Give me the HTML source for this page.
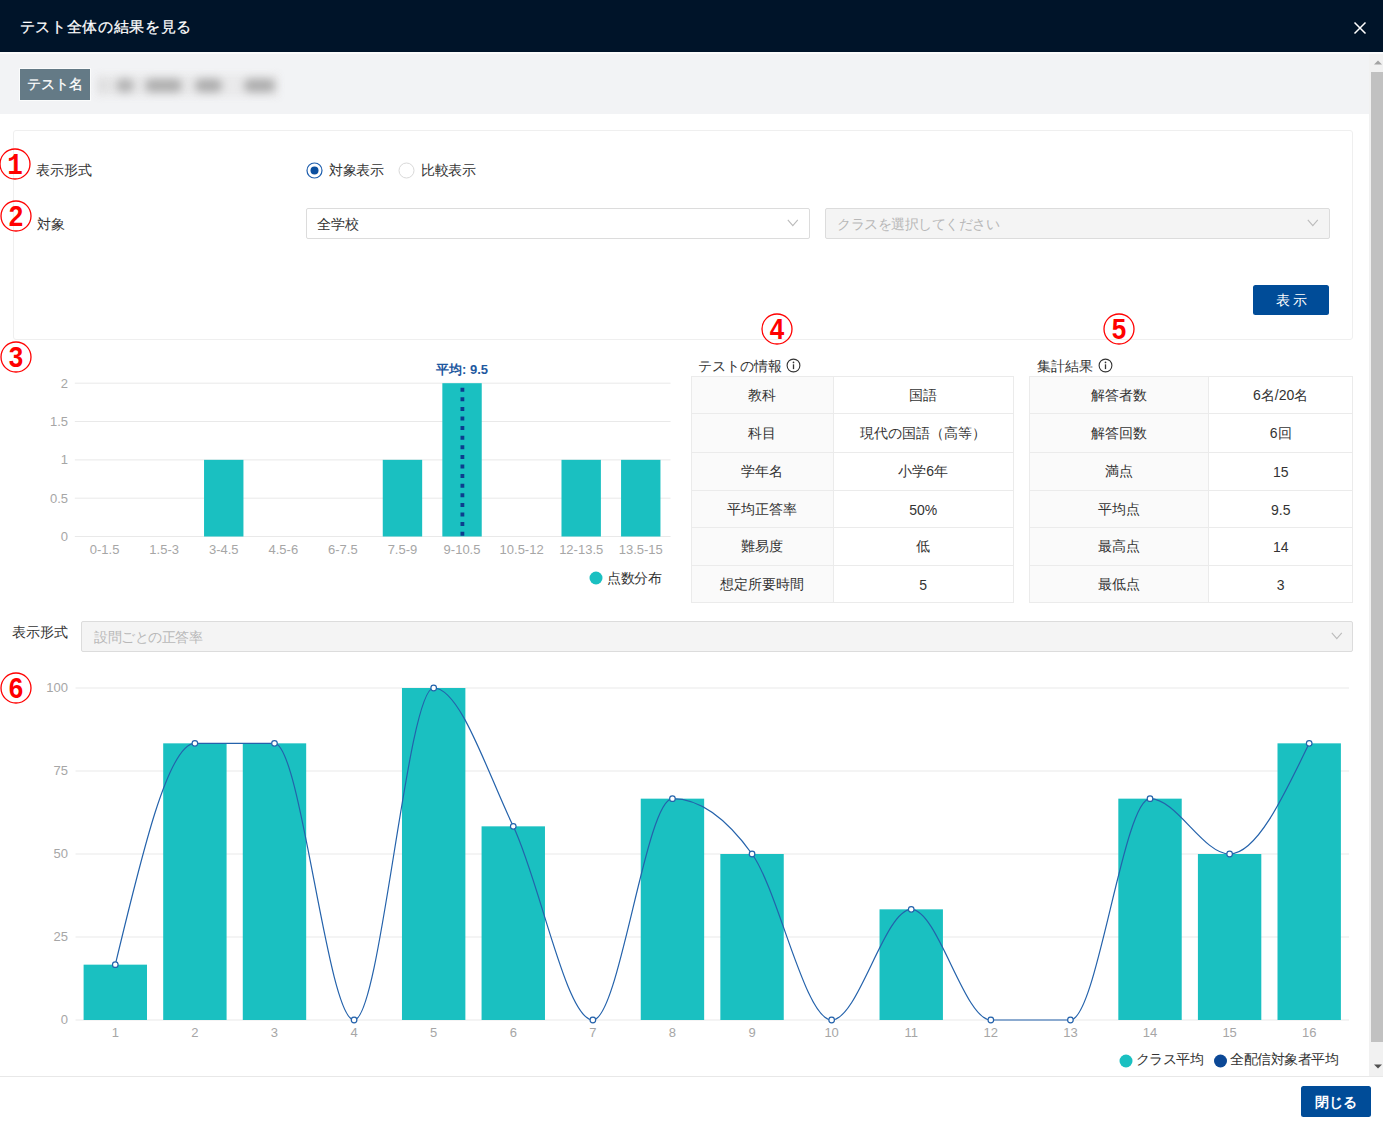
<!DOCTYPE html>
<html lang="ja"><head><meta charset="utf-8"><title>テスト全体の結果を見る</title>
<style>
*{box-sizing:border-box;margin:0;padding:0}
html,body{width:1383px;height:1121px;overflow:hidden;background:#fff}
body{position:relative;font-family:"Liberation Sans",sans-serif;color:#333;font-size:13px}
.abs{position:absolute;white-space:nowrap}
.hdr{left:0;top:0;width:1383px;height:52px;background:#001429}
.hdr-line{left:0;top:52px;width:1383px;height:2px;background:#fbfbfb}
.title{left:19.5px;top:17px;font-size:15px;line-height:20px;color:#fff;letter-spacing:0.7px;-webkit-text-stroke:0.25px #fff}
.band{left:0;top:54px;width:1369px;height:60px;background:#f2f3f5}
.lbl{left:20px;top:68.5px;width:70px;height:31px;background:#647a86;color:#fff;font-size:14px;line-height:31px;text-align:center;-webkit-text-stroke:0.25px #fff;outline:1px solid rgba(255,255,255,0.7)}
.card{left:13px;top:130px;width:1340px;height:210px;border:1px solid #efefef;border-radius:3px;background:#fff}
.txt{font-size:14px;line-height:16px;color:#333}
.sel{height:31px;border:1px solid #dcdcdc;border-radius:2px;background:#fff}
.sel.dis{background:#f4f4f4}
.btn{background:#004c98;color:#fff;border-radius:2.5px;text-align:center}
.tbl{border-collapse:collapse;position:absolute}
.tbl td{border:1px solid #ebebeb;text-align:center;font-size:14px;color:#333;padding:2px 0 0 0}
.tbl td.h{background:#fafafa}
.sb{left:1369px;top:54px;width:14px;height:1022px;background:#f1f1f1}
.thumb{left:1371px;top:72px;width:12px;height:970px;background:#c1c1c1}
</style></head><body>

<div class="abs hdr"></div><div class="abs hdr-line"></div>
<div class="abs title">テスト全体の結果を見る</div>
<svg class="abs" style="left:1353px;top:21px" width="14" height="14" viewBox="0 0 14 14"><path d="M1.5,1.5 L12.5,12.5 M12.5,1.5 L1.5,12.5" stroke="#fff" stroke-width="1.5"/></svg>
<div class="abs band"></div>
<div class="abs lbl">テスト名</div>
<div class="abs" style="left:97px;top:74px;width:182px;height:23px;background:#eaeaeb;filter:blur(3px)"></div>
<div class="abs" style="left:97px;top:79px;width:12px;height:13px;background:rgba(135,135,135,0.12);filter:blur(4px);border-radius:6px"></div>
<div class="abs" style="left:116px;top:79px;width:18px;height:13px;background:rgba(135,135,135,0.55);filter:blur(4px);border-radius:6px"></div>
<div class="abs" style="left:145px;top:79px;width:37px;height:13px;background:rgba(135,135,135,0.6);filter:blur(4px);border-radius:6px"></div>
<div class="abs" style="left:195px;top:79px;width:27px;height:13px;background:rgba(135,135,135,0.62);filter:blur(4px);border-radius:6px"></div>
<div class="abs" style="left:244px;top:79px;width:31px;height:13px;background:rgba(135,135,135,0.62);filter:blur(4px);border-radius:6px"></div>
<div class="abs card"></div>
<div class="abs txt" style="left:36px;top:162px">表示形式</div>
<div class="abs txt" style="left:36.5px;top:216px">対象</div>
<svg class="abs" style="left:305.5px;top:161.5px" width="17" height="17"><circle cx="8.5" cy="8.5" r="7.5" fill="#fff" stroke="#1f5fae" stroke-width="1.2"/><circle cx="8.5" cy="8.5" r="4" fill="#0b4f9f"/></svg>
<div class="abs txt" style="left:329px;top:162px;letter-spacing:-0.3px">対象表示</div>
<svg class="abs" style="left:398px;top:162px" width="17" height="17"><circle cx="8.5" cy="8.5" r="7.5" fill="#fff" stroke="#d9d9d9" stroke-width="1"/></svg>
<div class="abs txt" style="left:421px;top:162px;letter-spacing:-0.3px">比較表示</div>
<div class="abs sel" style="left:306px;top:208px;width:504px"></div>
<div class="abs txt" style="left:317px;top:216px">全学校</div>
<svg class="abs" style="left:787px;top:219px" width="12" height="8"><path d="M0.8,0.8 L5.8,6.6 L10.8,0.8" fill="none" stroke="#bbb" stroke-width="1.1"/></svg>
<div class="abs sel dis" style="left:825px;top:208px;width:505px"></div>
<div class="abs txt" style="left:837px;top:216px;color:#b8b8b8;letter-spacing:-0.5px">クラスを選択してください</div>
<svg class="abs" style="left:1307px;top:219px" width="12" height="8"><path d="M0.8,0.8 L5.8,6.6 L10.8,0.8" fill="none" stroke="#bbb" stroke-width="1.1"/></svg>
<div class="abs btn" style="left:1253px;top:285px;width:76px;height:30px;line-height:30px;font-size:14px;letter-spacing:3px;text-indent:3px">表示</div>
<svg class="abs" style="left:0;top:0" width="1383" height="1121" font-family="Liberation Sans"><line x1="74.8" y1="383.2" x2="670.55" y2="383.2" stroke="#e9e9e9" stroke-width="1"/><line x1="74.8" y1="421.5" x2="670.55" y2="421.5" stroke="#e9e9e9" stroke-width="1"/><line x1="74.8" y1="459.9" x2="670.55" y2="459.9" stroke="#e9e9e9" stroke-width="1"/><line x1="74.8" y1="498.2" x2="670.55" y2="498.2" stroke="#e9e9e9" stroke-width="1"/><line x1="74.8" y1="536.5" x2="670.55" y2="536.5" stroke="#e9e9e9" stroke-width="1"/><text x="68" y="387.5" text-anchor="end" font-size="13" fill="#a6a6a6">2</text><text x="68" y="425.8" text-anchor="end" font-size="13" fill="#a6a6a6">1.5</text><text x="68" y="464.2" text-anchor="end" font-size="13" fill="#a6a6a6">1</text><text x="68" y="502.5" text-anchor="end" font-size="13" fill="#a6a6a6">0.5</text><text x="68" y="540.8" text-anchor="end" font-size="13" fill="#a6a6a6">0</text><text x="104.59" y="553.5" text-anchor="middle" font-size="13" fill="#a6a6a6">0-1.5</text><text x="164.16" y="553.5" text-anchor="middle" font-size="13" fill="#a6a6a6">1.5-3</text><rect x="204.04" y="459.85" width="39.4" height="76.65" fill="#1ac0c1"/><text x="223.74" y="553.5" text-anchor="middle" font-size="13" fill="#a6a6a6">3-4.5</text><text x="283.31" y="553.5" text-anchor="middle" font-size="13" fill="#a6a6a6">4.5-6</text><text x="342.89" y="553.5" text-anchor="middle" font-size="13" fill="#a6a6a6">6-7.5</text><rect x="382.76" y="459.85" width="39.4" height="76.65" fill="#1ac0c1"/><text x="402.46" y="553.5" text-anchor="middle" font-size="13" fill="#a6a6a6">7.5-9</text><rect x="442.34" y="383.20" width="39.4" height="153.30" fill="#1ac0c1"/><text x="462.04" y="553.5" text-anchor="middle" font-size="13" fill="#a6a6a6">9-10.5</text><text x="521.61" y="553.5" text-anchor="middle" font-size="13" fill="#a6a6a6">10.5-12</text><rect x="561.49" y="459.85" width="39.4" height="76.65" fill="#1ac0c1"/><text x="581.19" y="553.5" text-anchor="middle" font-size="13" fill="#a6a6a6">12-13.5</text><rect x="621.06" y="459.85" width="39.4" height="76.65" fill="#1ac0c1"/><text x="640.76" y="553.5" text-anchor="middle" font-size="13" fill="#a6a6a6">13.5-15</text><line x1="462.4" y1="387.7" x2="462.4" y2="536.5" stroke="#0d3d8e" stroke-width="3.8" stroke-dasharray="4,5.6"/><text x="462" y="373.5" text-anchor="middle" font-size="13" font-weight="bold" fill="#1e58a0">平均: 9.5</text><circle cx="596" cy="578" r="6.5" fill="#1ac0c1"/><text x="607" y="582.5" font-size="14" letter-spacing="-0.4" fill="#333">点数分布</text><line x1="75.5" y1="688.0" x2="1349" y2="688.0" stroke="#e9e9e9" stroke-width="1"/><text x="68" y="692.3" text-anchor="end" font-size="13" fill="#a6a6a6">100</text><line x1="75.5" y1="771.0" x2="1349" y2="771.0" stroke="#e9e9e9" stroke-width="1"/><text x="68" y="775.3" text-anchor="end" font-size="13" fill="#a6a6a6">75</text><line x1="75.5" y1="854.0" x2="1349" y2="854.0" stroke="#e9e9e9" stroke-width="1"/><text x="68" y="858.3" text-anchor="end" font-size="13" fill="#a6a6a6">50</text><line x1="75.5" y1="937.0" x2="1349" y2="937.0" stroke="#e9e9e9" stroke-width="1"/><text x="68" y="941.3" text-anchor="end" font-size="13" fill="#a6a6a6">25</text><line x1="75.5" y1="1020.0" x2="1349" y2="1020.0" stroke="#e9e9e9" stroke-width="1"/><text x="68" y="1024.3" text-anchor="end" font-size="13" fill="#a6a6a6">0</text><rect x="83.60" y="964.66" width="63.4" height="55.34" fill="#1ac0c1"/><text x="115.30" y="1036.5" text-anchor="middle" font-size="13" fill="#a6a6a6">1</text><rect x="163.19" y="743.34" width="63.4" height="276.66" fill="#1ac0c1"/><text x="194.89" y="1036.5" text-anchor="middle" font-size="13" fill="#a6a6a6">2</text><rect x="242.78" y="743.34" width="63.4" height="276.66" fill="#1ac0c1"/><text x="274.48" y="1036.5" text-anchor="middle" font-size="13" fill="#a6a6a6">3</text><text x="354.08" y="1036.5" text-anchor="middle" font-size="13" fill="#a6a6a6">4</text><rect x="401.97" y="688.00" width="63.4" height="332.00" fill="#1ac0c1"/><text x="433.67" y="1036.5" text-anchor="middle" font-size="13" fill="#a6a6a6">5</text><rect x="481.57" y="826.34" width="63.4" height="193.66" fill="#1ac0c1"/><text x="513.27" y="1036.5" text-anchor="middle" font-size="13" fill="#a6a6a6">6</text><text x="592.86" y="1036.5" text-anchor="middle" font-size="13" fill="#a6a6a6">7</text><rect x="640.75" y="798.66" width="63.4" height="221.34" fill="#1ac0c1"/><text x="672.45" y="1036.5" text-anchor="middle" font-size="13" fill="#a6a6a6">8</text><rect x="720.35" y="854.00" width="63.4" height="166.00" fill="#1ac0c1"/><text x="752.05" y="1036.5" text-anchor="middle" font-size="13" fill="#a6a6a6">9</text><text x="831.64" y="1036.5" text-anchor="middle" font-size="13" fill="#a6a6a6">10</text><rect x="879.53" y="909.34" width="63.4" height="110.66" fill="#1ac0c1"/><text x="911.23" y="1036.5" text-anchor="middle" font-size="13" fill="#a6a6a6">11</text><text x="990.83" y="1036.5" text-anchor="middle" font-size="13" fill="#a6a6a6">12</text><text x="1070.42" y="1036.5" text-anchor="middle" font-size="13" fill="#a6a6a6">13</text><rect x="1118.32" y="798.66" width="63.4" height="221.34" fill="#1ac0c1"/><text x="1150.02" y="1036.5" text-anchor="middle" font-size="13" fill="#a6a6a6">14</text><rect x="1197.91" y="854.00" width="63.4" height="166.00" fill="#1ac0c1"/><text x="1229.61" y="1036.5" text-anchor="middle" font-size="13" fill="#a6a6a6">15</text><rect x="1277.50" y="743.34" width="63.4" height="276.66" fill="#1ac0c1"/><text x="1309.20" y="1036.5" text-anchor="middle" font-size="13" fill="#a6a6a6">16</text><path d="M115.30,964.66 C141.83,854.00 168.36,743.34 194.89,743.34 C221.42,743.34 247.95,743.34 274.48,743.34 C301.02,743.34 327.55,1020.00 354.08,1020.00 C380.61,1020.00 407.14,688.00 433.67,688.00 C460.20,688.00 486.73,771.01 513.27,826.34 C539.80,881.68 566.33,1020.00 592.86,1020.00 C619.39,1020.00 645.92,798.66 672.45,798.66 C698.98,798.66 725.52,817.11 752.05,854.00 C778.58,890.89 805.11,1020.00 831.64,1020.00 C858.17,1020.00 884.70,909.34 911.23,909.34 C937.77,909.34 964.30,1020.00 990.83,1020.00 C1017.36,1020.00 1043.89,1020.00 1070.42,1020.00 C1096.95,1020.00 1123.48,798.66 1150.02,798.66 C1176.55,798.66 1203.08,854.00 1229.61,854.00 C1256.14,854.00 1282.67,798.67 1309.20,743.34" fill="none" stroke="#2462ab" stroke-width="1.2"/><circle cx="115.30" cy="964.66" r="2.8" fill="#fff" stroke="#2462ab" stroke-width="1.2"/><circle cx="194.89" cy="743.34" r="2.8" fill="#fff" stroke="#2462ab" stroke-width="1.2"/><circle cx="274.48" cy="743.34" r="2.8" fill="#fff" stroke="#2462ab" stroke-width="1.2"/><circle cx="354.08" cy="1020.00" r="2.8" fill="#fff" stroke="#2462ab" stroke-width="1.2"/><circle cx="433.67" cy="688.00" r="2.8" fill="#fff" stroke="#2462ab" stroke-width="1.2"/><circle cx="513.27" cy="826.34" r="2.8" fill="#fff" stroke="#2462ab" stroke-width="1.2"/><circle cx="592.86" cy="1020.00" r="2.8" fill="#fff" stroke="#2462ab" stroke-width="1.2"/><circle cx="672.45" cy="798.66" r="2.8" fill="#fff" stroke="#2462ab" stroke-width="1.2"/><circle cx="752.05" cy="854.00" r="2.8" fill="#fff" stroke="#2462ab" stroke-width="1.2"/><circle cx="831.64" cy="1020.00" r="2.8" fill="#fff" stroke="#2462ab" stroke-width="1.2"/><circle cx="911.23" cy="909.34" r="2.8" fill="#fff" stroke="#2462ab" stroke-width="1.2"/><circle cx="990.83" cy="1020.00" r="2.8" fill="#fff" stroke="#2462ab" stroke-width="1.2"/><circle cx="1070.42" cy="1020.00" r="2.8" fill="#fff" stroke="#2462ab" stroke-width="1.2"/><circle cx="1150.02" cy="798.66" r="2.8" fill="#fff" stroke="#2462ab" stroke-width="1.2"/><circle cx="1229.61" cy="854.00" r="2.8" fill="#fff" stroke="#2462ab" stroke-width="1.2"/><circle cx="1309.20" cy="743.34" r="2.8" fill="#fff" stroke="#2462ab" stroke-width="1.2"/><circle cx="1126" cy="1061" r="6.5" fill="#1ac0c1"/><text x="1135.5" y="1064" font-size="14" letter-spacing="-0.4" fill="#333">クラス平均</text><circle cx="1220.5" cy="1061" r="6.5" fill="#0c4896"/><text x="1230" y="1064" font-size="14" letter-spacing="-0.5" fill="#333">全配信対象者平均</text></svg>
<div class="abs txt" style="left:698px;top:358px">テストの情報</div>
<div class="abs txt" style="left:1037px;top:358px">集計結果</div>
<svg class="abs" style="left:785.6px;top:358.1px" width="15" height="15"><circle cx="7.5" cy="7.5" r="6.4" fill="none" stroke="#333" stroke-width="1.1"/><rect x="6.85" y="6.3" width="1.3" height="4.8" fill="#333"/><circle cx="7.5" cy="4.4" r="0.85" fill="#333"/></svg>
<svg class="abs" style="left:1097.5px;top:358.1px" width="15" height="15"><circle cx="7.5" cy="7.5" r="6.4" fill="none" stroke="#333" stroke-width="1.1"/><rect x="6.85" y="6.3" width="1.3" height="4.8" fill="#333"/><circle cx="7.5" cy="4.4" r="0.85" fill="#333"/></svg>
<table class="tbl" style="left:691px;top:376px;width:323px"><tr style="height:37px"><td class="h" style="width:142px;height:37px">教科</td><td style="width:181px;height:37px">国語</td></tr><tr style="height:38.5px"><td class="h" style="width:142px;height:38.5px">科目</td><td style="width:181px;height:38.5px">現代の国語（高等）</td></tr><tr style="height:38px"><td class="h" style="width:142px;height:38px">学年名</td><td style="width:181px;height:38px">小学6年</td></tr><tr style="height:37.5px"><td class="h" style="width:142px;height:37.5px">平均正答率</td><td style="width:181px;height:37.5px">50%</td></tr><tr style="height:37.5px"><td class="h" style="width:142px;height:37.5px">難易度</td><td style="width:181px;height:37.5px">低</td></tr><tr style="height:37.5px"><td class="h" style="width:142px;height:37.5px">想定所要時間</td><td style="width:181px;height:37.5px">5</td></tr></table>
<table class="tbl" style="left:1029px;top:376px;width:324px"><tr style="height:37px"><td class="h" style="width:180px;height:37px">解答者数</td><td style="width:144px;height:37px">6名/20名</td></tr><tr style="height:38.5px"><td class="h" style="width:180px;height:38.5px">解答回数</td><td style="width:144px;height:38.5px">6回</td></tr><tr style="height:38px"><td class="h" style="width:180px;height:38px">満点</td><td style="width:144px;height:38px">15</td></tr><tr style="height:37.5px"><td class="h" style="width:180px;height:37.5px">平均点</td><td style="width:144px;height:37.5px">9.5</td></tr><tr style="height:37.5px"><td class="h" style="width:180px;height:37.5px">最高点</td><td style="width:144px;height:37.5px">14</td></tr><tr style="height:37.5px"><td class="h" style="width:180px;height:37.5px">最低点</td><td style="width:144px;height:37.5px">3</td></tr></table>
<div class="abs txt" style="left:12px;top:624px">表示形式</div>
<div class="abs sel dis" style="left:81px;top:621px;width:1272px"></div>
<div class="abs txt" style="left:94px;top:629px;color:#b8b8b8;letter-spacing:-0.5px">設問ごとの正答率</div>
<svg class="abs" style="left:1331px;top:632px" width="12" height="8"><path d="M0.8,0.8 L5.8,6.6 L10.8,0.8" fill="none" stroke="#bbb" stroke-width="1.1"/></svg>
<svg class="abs" style="left:-0.70px;top:147.70px" width="32" height="32"><circle cx="16" cy="16" r="15" fill="none" stroke="#f00" stroke-width="1.3"/><g transform="translate(16,26.4) scale(0.93,1.08)"><text x="0" y="0" text-anchor="middle" font-family="Liberation Mono" font-weight="bold" font-size="28" fill="#f00">1</text></g></svg>
<svg class="abs" style="left:-0.50px;top:199.90px" width="32" height="32"><circle cx="16" cy="16" r="15" fill="none" stroke="#f00" stroke-width="1.3"/><g transform="translate(16,26.4) scale(0.93,1.08)"><text x="0" y="0" text-anchor="middle" font-family="Liberation Sans" font-weight="bold" font-size="28" fill="#f00">2</text></g></svg>
<svg class="abs" style="left:0.10px;top:340.80px" width="32" height="32"><circle cx="16" cy="16" r="15" fill="none" stroke="#f00" stroke-width="1.3"/><g transform="translate(16,26.4) scale(0.93,1.08)"><text x="0" y="0" text-anchor="middle" font-family="Liberation Sans" font-weight="bold" font-size="28" fill="#f00">3</text></g></svg>
<svg class="abs" style="left:760.50px;top:313.00px" width="32" height="32"><circle cx="16" cy="16" r="15" fill="none" stroke="#f00" stroke-width="1.3"/><g transform="translate(16,26.4) scale(0.93,1.08)"><text x="0" y="0" text-anchor="middle" font-family="Liberation Sans" font-weight="bold" font-size="28" fill="#f00">4</text></g></svg>
<svg class="abs" style="left:1103.40px;top:313.00px" width="32" height="32"><circle cx="16" cy="16" r="15" fill="none" stroke="#f00" stroke-width="1.3"/><g transform="translate(16,26.4) scale(0.93,1.08)"><text x="0" y="0" text-anchor="middle" font-family="Liberation Sans" font-weight="bold" font-size="28" fill="#f00">5</text></g></svg>
<svg class="abs" style="left:0.30px;top:672.00px" width="32" height="32"><circle cx="16" cy="16" r="15" fill="none" stroke="#f00" stroke-width="1.3"/><g transform="translate(16,26.4) scale(0.93,1.08)"><text x="0" y="0" text-anchor="middle" font-family="Liberation Sans" font-weight="bold" font-size="28" fill="#f00">6</text></g></svg>
<div class="abs sb"></div><div class="abs thumb"></div>
<svg class="abs" style="left:1373px;top:59px" width="10" height="8"><path d="M1,5.5 L5,1.5 L9,5.5 Z" fill="#a3a3a3"/></svg>
<svg class="abs" style="left:1373px;top:1063px" width="10" height="8"><path d="M1,1.5 L5,5.5 L9,1.5 Z" fill="#505050"/></svg>
<div class="abs" style="left:0;top:1076px;width:1383px;height:1px;background:#e8e8e8"></div>
<div class="abs btn" style="left:1301px;top:1086px;width:70px;height:31px;line-height:33px;font-size:14px;font-weight:bold">閉じる</div>
</body></html>
